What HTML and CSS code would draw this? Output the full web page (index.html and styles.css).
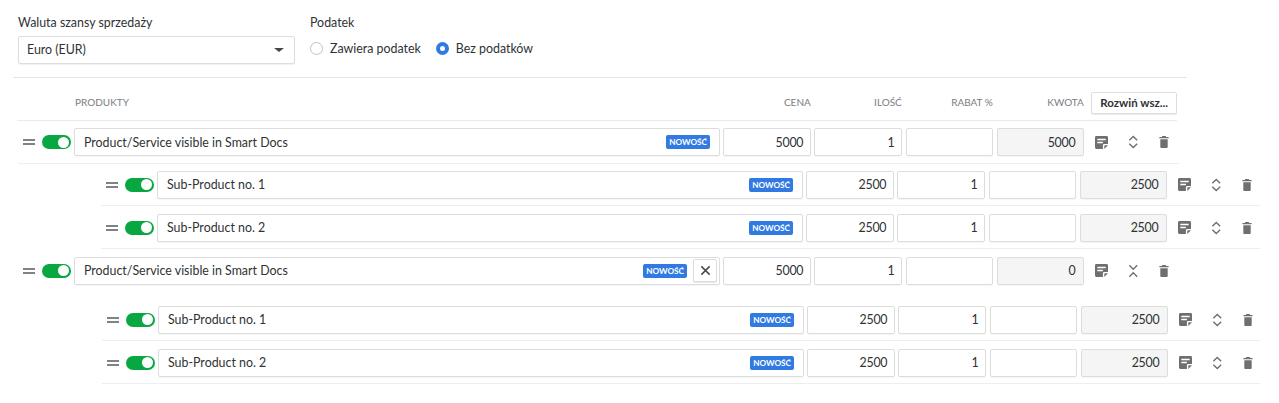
FILE: index.html
```html
<!DOCTYPE html>
<html lang="pl">
<head>
<meta charset="utf-8">
<title>Produkty</title>
<link rel="stylesheet" href="styles.css">
</head>
<body>
<svg class="defs" width="0" height="0" aria-hidden="true">
  <symbol id="i-note" viewBox="0 0 14 14"><path d="M1.500 0h11A1.500 1.500 0 0 1 14 1.500V8.500h-4a1.500 1.500 0 0 0-1.500 1.500v4h-7A1.500 1.500 0 0 1 0 12.500v-11A1.500 1.500 0 0 1 1.500 0zM2.500 3v1.600h9V3zM2.500 6.300v1.600h6V6.300z" fill-rule="evenodd"/><path d="M10 14v-3.500a.5.500 0 0 1 .5-.5H14z"/></symbol>
  <symbol id="i-updown" viewBox="0 0 12 16"><path d="M1.500 6 6 1.600 10.500 6M1.500 10 6 14.400 10.500 10" fill="none" stroke="currentColor" stroke-width="1.600"/></symbol>
  <symbol id="i-collapse" viewBox="0 0 12 16"><path d="M1.500 1.500 6 6l4.500-4.500M1.500 14.500 6 10l4.500 4.500" fill="none" stroke="currentColor" stroke-width="1.600"/></symbol>
  <symbol id="i-trash" viewBox="0 0 10 13"><path d="M3.200 0h3.600l.6 1H10v1.500H0V1h2.600zM1 3.500h8V12a1 1 0 0 1-1 1H2a1 1 0 0 1-1-1z"/></symbol>
</svg>

<section class="settings">
  <div class="field currency">
    <div class="label">Waluta szansy sprzedaży</div>
    <div class="select"><span>Euro (EUR)</span><i class="caret"></i></div>
  </div>
  <div class="field">
    <div class="label">Podatek</div>
    <div class="radios">
      <span class="radio"><i class="dot"></i>Zawiera podatek</span>
      <span class="radio"><i class="dot on"></i>Bez podatków</span>
    </div>
  </div>
</section>

<header class="head">
  <span class="h-name">PRODUKTY</span>
  <span class="h-num">CENA</span>
  <span class="h-num">ILOŚĆ</span>
  <span class="h-num">RABAT %</span>
  <span class="h-num">KWOTA</span>
  <button class="expand">Rozwiń wsz...</button>
</header>

<div class="row main">
  <div class="grip"></div><div class="toggle"></div>
  <div class="box name"><span class="title">Product/Service visible in Smart Docs</span><span class="badge">NOWOŚĆ</span></div>
  <div class="box num">5000</div><div class="box num">1</div><div class="box num"></div><div class="box num ro">5000</div>
  <div class="acts"><svg class="ic note"><use href="#i-note"/></svg><svg class="ic ud"><use href="#i-updown"/></svg><svg class="ic tr"><use href="#i-trash"/></svg></div>
</div>
<div class="row sub">
  <div class="grip"></div><div class="toggle"></div>
  <div class="box name"><span class="title">Sub-Product no. 1</span><span class="badge">NOWOŚĆ</span></div>
  <div class="box num">2500</div><div class="box num">1</div><div class="box num"></div><div class="box num ro">2500</div>
  <div class="acts"><svg class="ic note"><use href="#i-note"/></svg><svg class="ic ud"><use href="#i-updown"/></svg><svg class="ic tr"><use href="#i-trash"/></svg></div>
</div>
<div class="row sub">
  <div class="grip"></div><div class="toggle"></div>
  <div class="box name"><span class="title">Sub-Product no. 2</span><span class="badge">NOWOŚĆ</span></div>
  <div class="box num">2500</div><div class="box num">1</div><div class="box num"></div><div class="box num ro">2500</div>
  <div class="acts"><svg class="ic note"><use href="#i-note"/></svg><svg class="ic ud"><use href="#i-updown"/></svg><svg class="ic tr"><use href="#i-trash"/></svg></div>
</div>

<div class="row main open">
  <div class="grip"></div><div class="toggle"></div>
  <div class="box name"><span class="title">Product/Service visible in Smart Docs</span><span class="badge">NOWOŚĆ</span><button class="clear" aria-label="Wyczyść"><svg viewBox="0 0 12 12"><path d="M1.500 1.500l9 9M10.500 1.500l-9 9"/></svg></button></div>
  <div class="box num">5000</div><div class="box num">1</div><div class="box num"></div><div class="box num ro">0</div>
  <div class="acts"><svg class="ic note"><use href="#i-note"/></svg><svg class="ic ud"><use href="#i-collapse"/></svg><svg class="ic tr"><use href="#i-trash"/></svg></div>
</div>
<div class="row sub shifted">
  <div class="grip"></div><div class="toggle"></div>
  <div class="box name"><span class="title">Sub-Product no. 1</span><span class="badge">NOWOŚĆ</span></div>
  <div class="box num">2500</div><div class="box num">1</div><div class="box num"></div><div class="box num ro">2500</div>
  <div class="acts"><svg class="ic note"><use href="#i-note"/></svg><svg class="ic ud"><use href="#i-updown"/></svg><svg class="ic tr"><use href="#i-trash"/></svg></div>
</div>
<div class="row sub shifted">
  <div class="grip"></div><div class="toggle"></div>
  <div class="box name"><span class="title">Sub-Product no. 2</span><span class="badge">NOWOŚĆ</span></div>
  <div class="box num">2500</div><div class="box num">1</div><div class="box num"></div><div class="box num ro">2500</div>
  <div class="acts"><svg class="ic note"><use href="#i-note"/></svg><svg class="ic ud"><use href="#i-updown"/></svg><svg class="ic tr"><use href="#i-trash"/></svg></div>
</div>
</body>
</html>
```
FILE: styles.css
```css
* { box-sizing: border-box; }
html, body { margin: 0; background: #fff; }
body {
  height: 403px;
  overflow: hidden;
  font-family: Lato, "Noto Sans", sans-serif;
  font-size: 12.4px;
  color: #2f3234;
}
.defs { display: block; height: 0; }

.settings {
  display: flex;
  gap: 15px;
  width: 1174px;
  height: 78px;
  margin-left: 13px;
  padding: 15px 0 0 5px;
  border-bottom: 1px solid #e3e4e4;
}
.label { height: 21px; line-height: 15px; }
.select {
  display: flex;
  align-items: center;
  justify-content: space-between;
  width: 277px;
  height: 28px;
  padding: 0 10px 2px 8px;
  border: 1px solid #dcdddd;
  border-radius: 2px;
  box-shadow: 0 1px 1px rgba(0,0,0,.06);
}
.caret {
  width: 0; height: 0;
  margin-top: 2px;
  border-style: solid;
  border-color: #45484a transparent transparent;
  border-width: 4px 5px 0;
}
.radios { display: flex; gap: 15px; height: 24px; align-items: center; }
.radio { display: flex; align-items: center; gap: 7px; }
.dot {
  width: 13px; height: 13px;
  border: 1px solid #bfc1c2;
  border-radius: 50%;
  background: #fff;
}
.dot.on { border: 4px solid #317ae2; }

.head {
  display: flex;
  align-items: center;
  width: 1160px;
  height: 43px;
  margin-left: 17px;
  padding-top: 7px;
  border-bottom: 1px solid #e9eaea;
  font-size: 10px;
  color: #7a7d7f;
}
.h-name { width: 703.500px; padding-left: 58px; margin-bottom: 2px; }
.h-num { width: 91.33px; margin-bottom: 2px; text-align: right; }
.h-name + .h-num { width: 93px; }
.expand {
  width: 86px;
  height: 22px;
  margin-left: 7.500px;
  padding: 0;
  background: #fff;
  border: 1px solid #dcdddd;
  border-radius: 2px;
  box-shadow: 0 1px 1px rgba(0,0,0,.08);
  font: 700 11.500px Lato, "Noto Sans", sans-serif;
  color: #2f3234;
}

.row {
  display: flex;
  align-items: center;
  height: 42.67px;
  padding: 1px 0 0 5px;
  border-bottom: 1px solid #edeeee;
}
.main { width: 1161px; margin-left: 18px; }
.sub { width: 1159px; margin-left: 101px; }
.open { height: 49.67px; padding-bottom: 7px; border-bottom: 0; }
.shifted { margin-left: 102px; width: 1158px; }

.grip {
  width: 12px;
  height: 6px;
  margin-right: 7px;
  border-top: 2px solid #808385;
  border-bottom: 2px solid #808385;
}
.toggle {
  position: relative;
  width: 29px;
  height: 14px;
  margin-right: 3px;
  border-radius: 7px;
  background: #08a742;
}
.toggle::after {
  content: "";
  position: absolute;
  right: 2px; top: 1.500px;
  width: 11px; height: 11px;
  border-radius: 50%;
  background: #fff;
}
.box {
  display: flex;
  align-items: center;
  height: 28px;
  border: 1px solid #dcdddd;
  border-radius: 2px;
  background: #fff;
  box-shadow: 0 1px 1px rgba(0,0,0,.04);
}
.name { width: 646px; padding: 0 9px; margin-right: 3px; }
.title { flex: 1; }
.badge {
  height: 14px;
  padding: 0 3px;
  border-radius: 2px;
  background: #317ae2;
  color: #fff;
  font-size: 8.200px;
  font-weight: 700;
  line-height: 14px;
}
.clear {
  display: flex;
  align-items: center;
  justify-content: center;
  width: 24px;
  height: 23px;
  margin: 0 -7px 0 6px;
  padding: 0;
  background: #fff;
  border: 1px solid #dcdddd;
  border-radius: 2px;
  box-shadow: 0 1px 1px rgba(0,0,0,.1);
}
.clear svg { width: 11px; height: 11px; fill: none; stroke: #45484a; stroke-width: 1.6; }
.num {
  justify-content: flex-end;
  width: 87.67px;
  padding-right: 6.500px;
  margin-right: 3.67px;
  letter-spacing: -.3px;
}
.ro { width: 87.330px; padding-right: 8px; background: #f5f5f5; margin-right: 0; }
.acts { display: flex; align-items: center; margin-left: 9.830px; }
.ic { display: block; color: #6d7072; fill: #6d7072; }
.note { width: 13px; height: 13px; margin-left: 1px; }
.ud { width: 10.500px; height: 16px; margin-left: 19.500px; }
.tr { width: 10px; height: 12px; margin-left: 21px; }
```
